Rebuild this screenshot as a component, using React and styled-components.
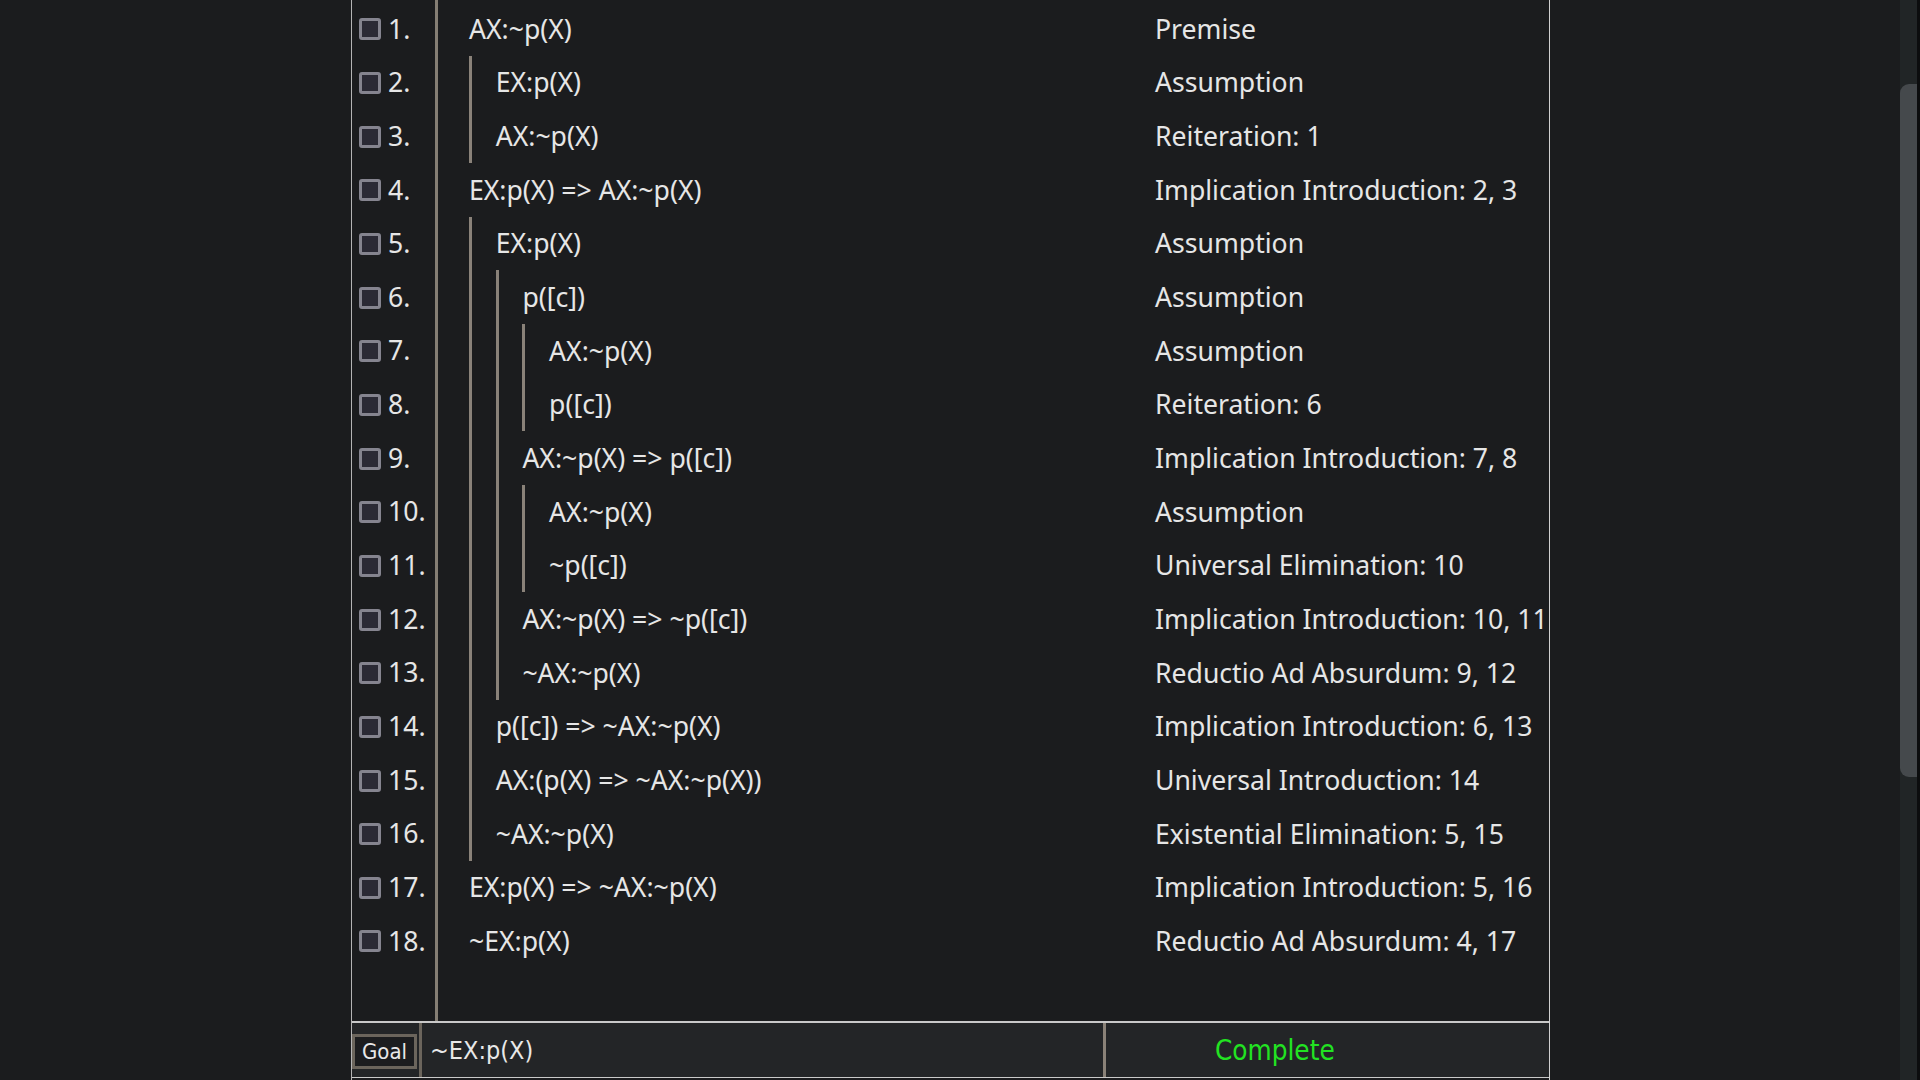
import React from "react";
import styled, { createGlobalStyle } from "styled-components";

const ROW_H = 53.67;

const Global = createGlobalStyle`
  html, body {
    margin: 0;
    height: 100%;
    overflow: hidden;
    background: #1b1c1e;
  }
  body {
    font-family: "Noto Sans", "Open Sans", sans-serif;
    color: #e6e6e6;
  }
  #root {
    height: 100%;
  }
`;

const Screen = styled.div`
  height: 100vh;
  display: flex;
  background: #1b1c1e;
`;

const Viewport = styled.div`
  flex: 1;
  min-width: 0;
  display: flex;
  overflow: hidden;
`;

const ScrollTrack = styled.div`
  box-sizing: border-box;
  width: 20px;
  flex: none;
  background: linear-gradient(90deg, #212526 0 17px, #0c0d0e 17px);
  background-color: #212526;
`;

const ScrollThumb = styled.div`
  width: 17px;
  margin-top: 84px;
  height: 693px;
  border-radius: 9px 0 0 9px;
  background: #45494c;
`;

const Panel = styled.div`
  box-sizing: border-box;
  width: 1199px;
  margin-left: 351px;
  display: flex;
  flex-direction: column;
  border-left: 1px solid #b4b4b4;
  border-right: 1px solid #d0d0d0;
  background: #1b1c1e;
`;

const ProofBody = styled.div`
  flex: 1;
  min-height: 0;
  display: flex;
`;

const Gutter = styled.div`
  box-sizing: border-box;
  width: 86px;
  flex: none;
  padding-top: 2px;
  border-right: 3px solid #857e74;
`;

const GutterRow = styled.div`
  height: ${ROW_H}px;
  display: flex;
  align-items: center;
  padding-left: 7px;
  font-size: 26.6px;
`;

const Check = styled.input.attrs({ type: "checkbox" })`
  appearance: none;
  box-sizing: border-box;
  width: 22px;
  height: 22px;
  margin: 1px 7px 0 0;
  border: 3px solid #85848f;
  border-radius: 3px;
  background: #2b2a35;
  flex: none;
`;

const LineNo = styled.span`
  line-height: 1;
`;

const Main = styled.div`
  flex: 1;
  padding-top: 2px;
`;

const Row = styled.div`
  height: ${ROW_H}px;
  display: grid;
  grid-template-columns: 717px 1fr;
  font-size: 26.6px;
`;

const FormulaCell = styled.div`
  display: flex;
  align-items: stretch;
  padding-left: 31px;
`;

const Bar = styled.span`
  box-sizing: border-box;
  flex: none;
  width: 26.7px;
  border-left: 3px solid #8a8279;
`;

const Formula = styled.span`
  align-self: center;
  white-space: pre;
`;

const Rule = styled.div`
  align-self: center;
  white-space: nowrap;
`;

const Footer = styled.footer`
  box-sizing: border-box;
  flex: none;
  height: 57px;
  margin-bottom: 2px;
  display: flex;
  align-items: stretch;
  background: #232527;
  border-top: 2px solid #c9c9c9;
  border-bottom: 1px solid #c9c9c9;
  font-family: "DejaVu Sans Condensed", "DejaVu Sans", sans-serif;
`;

const GoalButton = styled.button`
  box-sizing: border-box;
  align-self: center;
  margin-top: 3px;
  width: 65px;
  height: 35px;
  padding: 0 0 1px;
  border: 3px solid #6b655c;
  background: #1c1d1f;
  color: #e8e8e8;
  font-family: inherit;
  font-size: 22px;
  flex: none;
`;

const GoalFormula = styled.div`
  flex: none;
  box-sizing: border-box;
  width: 684px;
  margin-left: 2px;
  border-left: 3px solid #6b655c;
  padding-left: 8px;
  display: flex;
  align-items: center;
  font-size: 25px;
  color: #e8e8e8;
`;

const Status = styled.div`
  flex: 1;
  border-left: 3px solid #8a8278;
  padding-left: 109px;
  display: flex;
  align-items: center;
  font-size: 27.6px;
  color: #22e322;
`;

const rows = [
  [0, "AX:~p(X)", "Premise"],
  [1, "EX:p(X)", "Assumption"],
  [1, "AX:~p(X)", "Reiteration: 1"],
  [0, "EX:p(X) => AX:~p(X)", "Implication Introduction: 2, 3"],
  [1, "EX:p(X)", "Assumption"],
  [2, "p([c])", "Assumption"],
  [3, "AX:~p(X)", "Assumption"],
  [3, "p([c])", "Reiteration: 6"],
  [2, "AX:~p(X) => p([c])", "Implication Introduction: 7, 8"],
  [3, "AX:~p(X)", "Assumption"],
  [3, "~p([c])", "Universal Elimination: 10"],
  [2, "AX:~p(X) => ~p([c])", "Implication Introduction: 10, 11"],
  [2, "~AX:~p(X)", "Reductio Ad Absurdum: 9, 12"],
  [1, "p([c]) => ~AX:~p(X)", "Implication Introduction: 6, 13"],
  [1, "AX:(p(X) => ~AX:~p(X))", "Universal Introduction: 14"],
  [1, "~AX:~p(X)", "Existential Elimination: 5, 15"],
  [0, "EX:p(X) => ~AX:~p(X)", "Implication Introduction: 5, 16"],
  [0, "~EX:p(X)", "Reductio Ad Absurdum: 4, 17"],
];

export default function App() {
  return (
    <>
      <Global />
      <Screen>
        <Viewport>
          <Panel>
            <ProofBody>
              <Gutter>
                {rows.map((_, i) => (
                  <GutterRow key={i}>
                    <Check />
                    <LineNo>{i + 1}.</LineNo>
                  </GutterRow>
                ))}
              </Gutter>
              <Main>
                {rows.map(([depth, f, r], i) => (
                  <Row key={i}>
                    <FormulaCell>
                      {Array.from({ length: depth }, (_, k) => (
                        <Bar key={k} />
                      ))}
                      <Formula>{f}</Formula>
                    </FormulaCell>
                    <Rule>{r}</Rule>
                  </Row>
                ))}
              </Main>
            </ProofBody>
            <Footer>
              <GoalButton>Goal</GoalButton>
              <GoalFormula>~EX:p(X)</GoalFormula>
              <Status>Complete</Status>
            </Footer>
          </Panel>
        </Viewport>
        <ScrollTrack>
          <ScrollThumb />
        </ScrollTrack>
      </Screen>
    </>
  );
}
